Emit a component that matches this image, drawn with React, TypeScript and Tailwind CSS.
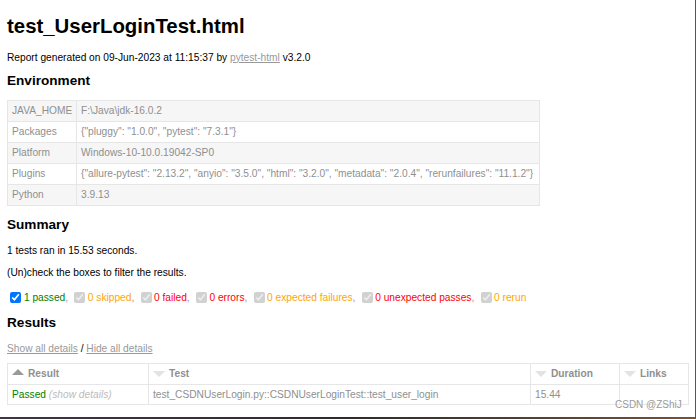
import React from "react";

const envRows: [string, string][] = [
  ["JAVA_HOME", "F:\\Java\\jdk-16.0.2"],
  ["Packages", '{"pluggy": "1.0.0", "pytest": "7.3.1"}'],
  ["Platform", "Windows-10-10.0.19042-SP0"],
  [
    "Plugins",
    '{"allure-pytest": "2.13.2", "anyio": "3.5.0", "html": "3.2.0", "metadata": "2.0.4", "rerunfailures": "11.1.2"}',
  ],
  ["Python", "3.9.13"],
];

const filters: { label: string; cls: string; enabled: boolean }[] = [
  { label: "1 passed", cls: "text-[#008000]", enabled: true },
  { label: "0 skipped", cls: "text-[#ffa500]", enabled: false },
  { label: "0 failed", cls: "text-[#ff0000]", enabled: false },
  { label: "0 errors", cls: "text-[#ff0000]", enabled: false },
  { label: "0 expected failures", cls: "text-[#ffa500]", enabled: false },
  { label: "0 unexpected passes", cls: "text-[#ff0000]", enabled: false },
  { label: "0 rerun", cls: "text-[#ffa500]", enabled: false },
];

function SortDown() {
  return (
    <span className="inline-block w-0 h-0 border-x-[6.5px] border-x-transparent border-t-[6.5px] border-t-[#e3e3e3] mr-[4px] mt-[4px] align-top" />
  );
}

function SortUp() {
  return (
    <span className="inline-block w-0 h-0 border-x-[6.5px] border-x-transparent border-b-[6.5px] border-b-[#999] mr-[4px] mt-[2px] align-top" />
  );
}

export default function App() {
  return (
    <div className="w-[696px] h-[419px] overflow-hidden bg-white flex flex-col font-['Liberation_Sans',Arial,sans-serif] text-[#8f8f8f]">
      <div className="flex-1 flex min-h-0">
        <div className="flex-1 relative pl-[7px]">
          <h1 className="mt-[14px] h-[24px] leading-[24px] text-[20.4px] font-bold text-black">
            test_UserLoginTest.html
          </h1>
          <p className="mt-[12.6px] h-[14px] leading-[14px] text-[10.2px] text-black">
            Report generated on 09-Jun-2023 at 11:15:37 by{" "}
            <a className="text-[#999] underline">pytest-html</a> v3.2.0
          </p>
          <h2 className="mt-[7px] h-[18px] leading-[18px] text-[13.6px] font-bold text-black">
            Environment
          </h2>
          <table className="mt-[10.5px] w-[533px] table-fixed border-collapse text-[10.2px]">
            <colgroup>
              <col className="w-[69px]" />
              <col />
            </colgroup>
            <tbody>
              {envRows.map(([k, v], i) => (
                <tr key={k} className={i % 2 === 0 ? "bg-[#f6f6f6]" : "bg-white"}>
                  <td className="h-[21px] px-[4px] py-0 border border-[#e6e6e6] leading-[14px] whitespace-nowrap">
                    {k}
                  </td>
                  <td className="h-[21px] px-[4px] py-0 border border-[#e6e6e6] leading-[14px] whitespace-nowrap">
                    {v}
                  </td>
                </tr>
              ))}
            </tbody>
          </table>
          <h2 className="mt-[9.8px] h-[18px] leading-[18px] text-[13.6px] font-bold text-black">
            Summary
          </h2>
          <p className="mt-[10.2px] h-[14px] leading-[14px] text-[10.2px] text-black">
            1 tests ran in 15.53 seconds.
          </p>
          <p className="mt-[7.6px] h-[14px] leading-[14px] text-[10.2px] text-black">
            (Un)check the boxes to filter the results.
          </p>
          <p className="mt-[11.7px] h-[14px] leading-[14px] text-[10.2px] text-[#999] whitespace-nowrap">
            {filters.map((f, i) => (
              <React.Fragment key={f.label}>
                <input
                  type="checkbox"
                  defaultChecked
                  disabled={!f.enabled}
                  className="w-[11px] h-[11px] ml-[3.4px] mr-[2.5px] my-0 align-[-2px]"
                />
                <span className={f.cls}>{f.label}</span>
                {i < filters.length - 1 ? ", " : ""}
              </React.Fragment>
            ))}
          </p>
          <h2 className="mt-[8.9px] h-[18px] leading-[18px] text-[13.6px] font-bold text-black">
            Results
          </h2>
          <p className="mt-[10.1px] h-[14px] leading-[14px] text-[10.2px] text-black">
            <a className="text-[#999] underline">Show all details</a> /{" "}
            <a className="text-[#999] underline">Hide all details</a>
          </p>
          <table className="mt-[6.7px] w-[682px] table-fixed border-collapse text-[10.2px]">
            <colgroup>
              <col className="w-[141px]" />
              <col className="w-[382px]" />
              <col className="w-[89px]" />
              <col />
            </colgroup>
            <thead>
              <tr>
                <th className="h-[21px] px-[4px] py-0 border border-[#e6e6e6] text-left font-bold leading-[14px]">
                  <SortUp />
                  Result
                </th>
                <th className="h-[21px] px-[4px] py-0 border border-[#e6e6e6] text-left font-bold leading-[14px]">
                  <SortDown />
                  Test
                </th>
                <th className="h-[21px] px-[4px] py-0 border border-[#e6e6e6] text-left font-bold leading-[14px]">
                  <SortDown />
                  Duration
                </th>
                <th className="h-[21px] px-[4px] py-0 border border-[#e6e6e6] text-left font-bold leading-[14px]">
                  <SortDown />
                  Links
                </th>
              </tr>
            </thead>
            <tbody>
              <tr>
                <td className="h-[20px] px-[4px] py-0 border border-[#e6e6e6] leading-[14px] whitespace-nowrap">
                  <span className="text-[#008000]">Passed</span>{" "}
                  <span className="italic text-[#bbb]">(show details)</span>
                </td>
                <td className="h-[20px] px-[4px] py-0 border border-[#e6e6e6] leading-[14px] whitespace-nowrap">
                  test_CSDNUserLogin.py::CSDNUserLoginTest::test_user_login
                </td>
                <td className="h-[20px] px-[4px] py-0 border border-[#e6e6e6] leading-[14px]">15.44</td>
                <td className="h-[20px] px-[4px] py-0 border border-[#e6e6e6] leading-[14px]" />
              </tr>
            </tbody>
          </table>
          <span className="absolute left-[615px] top-[399px] text-[10px] leading-[12px] text-[#9a9a9a] [text-shadow:0_0_2px_#fff]">
            CSDN @ZShiJ
          </span>
        </div>
        <div className="w-[1px] bg-[#555]" />
      </div>
      <div className="h-[2px] bg-gradient-to-r from-[#3d3548] via-[#2e2b2c] to-[#7a5230]" />
    </div>
  );
}
